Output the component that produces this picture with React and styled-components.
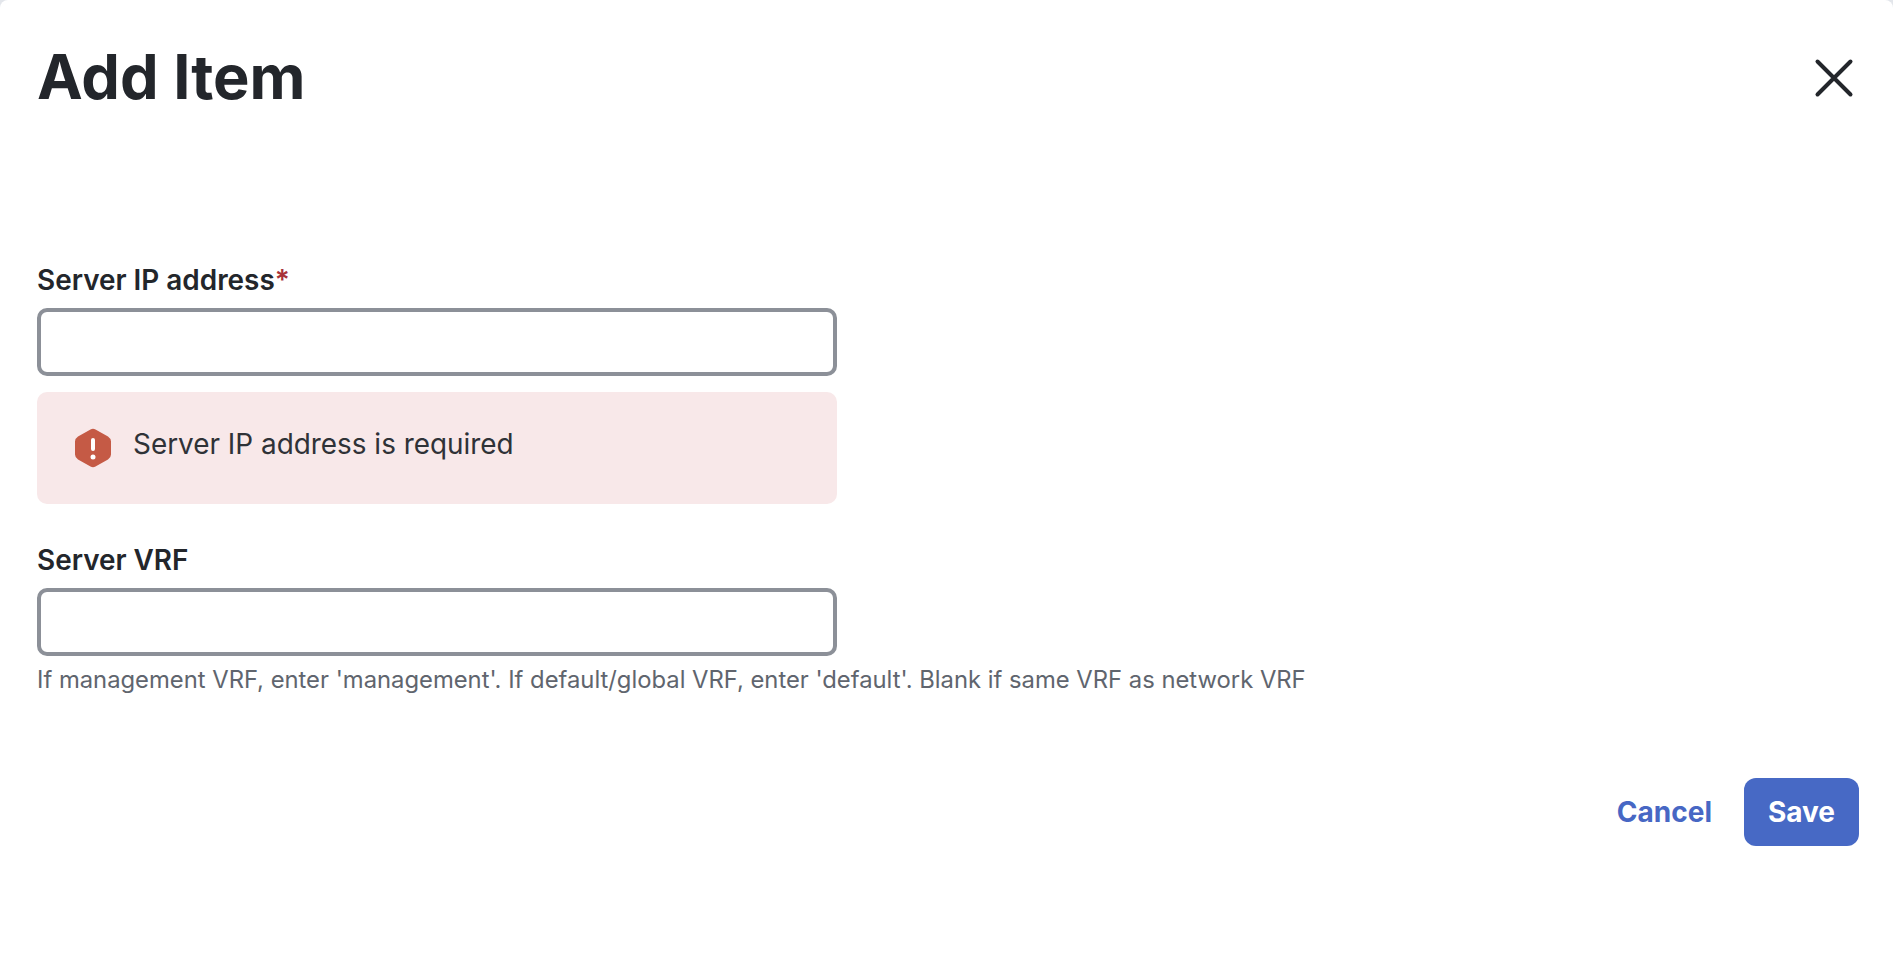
import styled, { createGlobalStyle } from "styled-components";

const GlobalStyle = createGlobalStyle`
   html, body {
      margin: 0;
      background: #e3e6eb;
      font-family: Inter, "Liberation Sans", sans-serif;
   }
`;

const Modal = styled.div`
   width: 1893px;
   height: 958px;
   padding: 0 34px 0 37px;
   box-sizing: border-box;
   display: flex;
   flex-direction: column;
   overflow: hidden;
   background: #fff;
   border-radius: 8px 8px 0 0;
`;

const Header = styled.div`
   display: flex;
   justify-content: space-between;
   align-items: center;
   height: 156px;
`;

const Title = styled.h1`
   margin: 0 0 2px;
   font-size: 61.3px;
   font-weight: 700;
   color: #23262b;
`;

const CloseButton = styled.button`
   border: 0;
   padding: 0;
   margin-right: 4px;
   background: none;
   display: flex;
`;

const Form = styled.form`
   margin-top: 107px;
   display: flex;
   flex-direction: column;
`;

const Label = styled.label`
   font-size: 27.9px;
   font-weight: 600;
   color: #23262b;
   line-height: 34px;
   margin-bottom: 11px;
`;

const Star = styled.span`
   color: #a8323a;
`;

const Input = styled.input`
   width: 800px;
   height: 68px;
   box-sizing: border-box;
   border: 4px solid #8c9098;
   border-radius: 10px;
   background: #fff;
`;

const ErrorBox = styled.div`
   width: 800px;
   height: 112px;
   box-sizing: border-box;
   margin: 16px 0 39px;
   padding: 0 38px;
   display: flex;
   align-items: center;
   gap: 22px;
   border-radius: 10px;
   background: #f8e8e9;
   font-size: 27.9px;
   color: #2f3237;
`;

const ErrorText = styled.span`
   margin-bottom: 8px;
`;

const Hint = styled.p`
   margin: 9px 0 0;
   font-size: 23.8px;
   color: #60656e;
`;

const Footer = styled.div`
   margin-top: 84px;
   display: flex;
   justify-content: flex-end;
   align-items: center;
   gap: 32px;
`;

const CancelButton = styled.button`
   border: 0;
   background: none;
   padding: 0;
   font: 700 28px Inter, sans-serif;
   color: #4767c4;
`;

const SaveButton = styled.button`
   width: 115px;
   height: 68px;
   border: 0;
   border-radius: 12px;
   background: #4769c5;
   color: #fff;
   font: 700 28px Inter, sans-serif;
`;

const App = () => {
   return (
      <Modal>
         <GlobalStyle />
         <Header>
            <Title>Add Item</Title>
            <CloseButton type="button" aria-label="Close">
               <svg width="42" height="42" viewBox="0 0 42 42">
                  <path d="M4.5 4.5L37.5 37.5M37.5 4.5L4.5 37.5" stroke="#23262b" strokeWidth="4" strokeLinecap="round" />
               </svg>
            </CloseButton>
         </Header>
         <Form>
            <Label>Server IP address<Star>*</Star></Label>
            <Input />
            <ErrorBox>
               <svg width="36" height="40" viewBox="0 0 36 40">
                  <path d="M15.5 1.5L3 8.5Q0 10.5 0 13.5V26.5Q0 29.5 3 31.5L15.5 38.5Q18 40 20.5 38.5L33 31.5Q36 29.5 36 26.5V13.5Q36 10.5 33 8.5L20.5 1.5Q18 0 15.5 1.5Z" fill="#c55a45" />
                  <rect x="16" y="10" width="4" height="13" rx="2" fill="#fff" />
                  <circle cx="18" cy="29" r="2.5" fill="#fff" />
               </svg>
               <ErrorText>Server IP address is required</ErrorText>
            </ErrorBox>
            <Label>Server VRF</Label>
            <Input />
            <Hint>If management VRF, enter 'management'. If default/global VRF, enter 'default'. Blank if same VRF as network VRF</Hint>
         </Form>
         <Footer>
            <CancelButton type="button">Cancel</CancelButton>
            <SaveButton type="button">Save</SaveButton>
         </Footer>
      </Modal>
   )
}

export default App
